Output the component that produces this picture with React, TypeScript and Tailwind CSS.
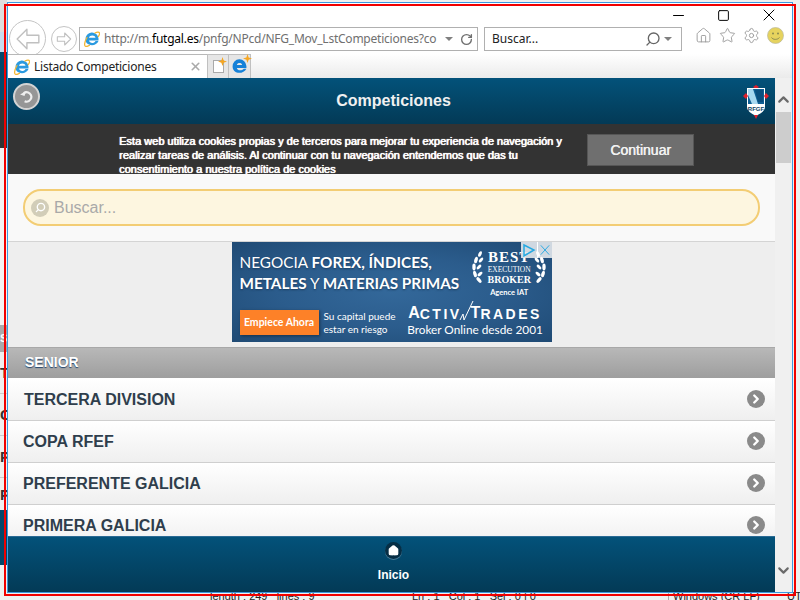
import { House, Star, Settings, RotateCw, Search, X, Minus, Square, ChevronUp, ChevronDown, ChevronRight } from 'lucide-react';

const competitions = [
  { name: 'TERCERA DIVISION', pad: 'pl-[16px]' },
  { name: 'COPA RFEF', pad: 'pl-[15px]' },
  { name: 'PREFERENTE GALICIA', pad: 'pl-[15px]' },
  { name: 'PRIMERA GALICIA', pad: 'pl-[15px]' },
];

function IeLogo({ size = 16 }: { size?: number }) {
  return (
    <svg width={size} height={size} viewBox="0 0 32 32" fill="none">
      <path d="M3 17a13 13 0 0 1 26-2v4H10c1 6 10 7 13 1h6c-4 12-26 11-26-3Zm7-3.500h13c-1-6-12-6-13 0Z" fill="#2a9ae0" fillRule="evenodd" />
      <path d="M22 4c4-2 8-3 9 0 .6 2-1 5-2.500 7M6 13C2 20 0 26 2 29.500c1.500 2 6 1 9-1" stroke="#f2b632" strokeWidth="2.500" strokeLinecap="round" />
    </svg>
  );
}

function SparkTab() {
  return (
    <svg width="9" height="9" viewBox="0 0 8 8" className="absolute -right-[4px] -top-[4px]">
      <path d="M4 0l1 3 3 1-3 1-1 3-1-3-3-1 3-1z" fill="#f5a623" />
    </svg>
  );
}

function BackArrow({ size, box }: { size: number; box: string }) {
  return (
    <div className={`flex items-center justify-center rounded-full border border-[#c4c4c4] bg-white ${box}`}>
      <svg width={size} height={size} viewBox="0 0 24 24" fill="none">
        <path d="M11 3 2 12l9 9v-5.500h11v-7H11z" stroke="#c0c0c0" strokeWidth="1.300" strokeLinejoin="round" />
      </svg>
    </div>
  );
}

function ForwardArrow() {
  return (
    <div className="flex h-[26px] w-[26px] items-center justify-center rounded-full border border-[#c4c4c4] bg-white">
      <svg width="16" height="16" viewBox="0 0 24 24" fill="none">
        <path d="M13 3l9 9-9 9v-5.500H2v-7h11z" stroke="#c0c0c0" strokeWidth="1.600" strokeLinejoin="round" />
      </svg>
    </div>
  );
}

function Smiley() {
  return (
    <svg width="17" height="17" viewBox="0 0 17 17">
      <circle cx="8.500" cy="8.500" r="8" fill="#e6d35e" stroke="#b9b9a0" strokeWidth="0.700" />
      <circle cx="6" cy="6.500" r="1" fill="#8a8a50" />
      <circle cx="11" cy="6.500" r="1" fill="#8a8a50" />
      <path d="M4.500 10.500c1.500 2.500 6 2.500 8 0" stroke="#8a8a50" strokeWidth="1" fill="none" />
    </svg>
  );
}

function Shield() {
  return (
    <svg width="26" height="34" viewBox="0 0 26 34">
      <path d="M10 2l3-2 3 2-3 2z" fill="#e0202c" />
      <path d="M4 3h18v19c0 4-4 6-9 9-5-3-9-5-9-9z" fill="#fff" />
      <path d="M5 4h16v15H5z" fill="#0f5f94" />
      <path d="M5 4h5l5 15H9L5 10z" fill="#a8d8f0" />
      <path d="M12 5h8v12h-5z" fill="#0a4e7e" />
      <path d="M0 11l3-3 2 3-2 3zM26 11l-3-3-2 3 2 3z" fill="#e0202c" />
      <path d="M13 34l-2-4h4z" fill="#e0202c" />
      <text x="13" y="26" textAnchor="middle" fontSize="6" fontWeight="700" fill="#0c3f63" fontFamily="Liberation Sans">RFGF</text>
    </svg>
  );
}

function Laurel({ flip }: { flip?: boolean }) {
  return (
    <svg width="14" height="36" viewBox="0 0 14 34" className={flip ? '-scale-x-100' : ''}>
      <g fill="#fff">
        <ellipse cx="9" cy="3" rx="1.500" ry="3" transform="rotate(25 9 3)" />
        <ellipse cx="5" cy="9" rx="1.700" ry="3.400" transform="rotate(15 5 9)" />
        <ellipse cx="10" cy="9" rx="1.500" ry="3" transform="rotate(40 10 9)" />
        <ellipse cx="3" cy="16" rx="1.700" ry="3.400" />
        <ellipse cx="8" cy="16" rx="1.500" ry="3" transform="rotate(45 8 16)" />
        <ellipse cx="4" cy="23" rx="1.700" ry="3.400" transform="rotate(-15 4 23)" />
        <ellipse cx="9" cy="23" rx="1.500" ry="3" transform="rotate(50 9 23)" />
        <ellipse cx="8" cy="29" rx="1.700" ry="3.400" transform="rotate(-40 8 29)" />
      </g>
    </svg>
  );
}

function AdBanner() {
  return (
    <div className="relative flex h-[100px] w-[320px] flex-col bg-[radial-gradient(ellipse_at_center,#33689a_0%,#2b5c8c_50%,#1f4a74_100%)] pl-[8px] font-['Lato',sans-serif] text-white">
      <div className="absolute right-0 top-0 flex h-[16px] w-[31px] bg-[#e3e8ec]/90">
        <svg width="16" height="16" viewBox="0 0 16 16" fill="none">
          <path d="M3 3l10 5-10 6z" stroke="#27a9e1" strokeWidth="1.500" />
        </svg>
        <svg width="15" height="16" viewBox="0 0 15 16" fill="none" className="border-l border-white">
          <path d="M3 3l9 10M12 3l-9 10" stroke="#27a9e1" strokeWidth="1" />
        </svg>
      </div>
      <div className="flex h-[56px] shrink-0">
        <div className="flex flex-col pt-[10px] text-[15.300px] leading-[21px] [text-shadow:0_1px_2px_#1a3c5f]">
          <div className="h-[21px] whitespace-nowrap">
            NEGOCIA <span className="font-bold">FOREX, ÍNDICES,</span>
          </div>
          <div className="h-[21px] whitespace-nowrap">
            <span className="font-bold">METALES</span> Y <span className="font-bold">MATERIAS PRIMAS</span>
          </div>
        </div>
        <div className="ml-[12px] mt-[8px] flex items-start">
          <Laurel />
          <div className="flex w-[48px] flex-col items-center font-['Liberation_Serif',serif] leading-none">
            <span className="text-[15px] font-bold tracking-[1px]">BEST</span>
            <span className="mt-[1px] text-[7.500px]">EXECUTION</span>
            <span className="mt-[1px] text-[10px] font-bold">BROKER</span>
            <span className="mt-[4px] font-['Lato',sans-serif] text-[7.500px] font-bold">Agence IAT</span>
          </div>
          <Laurel flip />
        </div>
      </div>
      <div className="flex items-start">
        <div className="mt-[12px] flex h-[25px] w-[79px] items-center justify-center bg-[#fd8128] text-[10.500px] font-bold shadow-[1px_1px_3px_rgba(0,0,0,0.4)]">
          Empiece Ahora
        </div>
        <div className="ml-[5px] mt-[12px] flex flex-col text-[10px] leading-[13px]">
          <span className="whitespace-nowrap">Su capital puede</span>
          <span className="whitespace-nowrap">estar en riesgo</span>
        </div>
        <div className="ml-[11px] mt-[3px] flex w-[137px] flex-col items-center">
          <div className="flex h-[20px] items-end font-['Liberation_Sans',sans-serif] font-bold leading-none">
            <span className="text-[16px]">A</span>
            <span className="text-[14px] tracking-[2.500px]">CTIV</span>
            <svg width="15" height="20" viewBox="0 0 15 20" fill="none" className="-mx-[3px]">
              <path d="M1 19 L4 13 L5 19 L14 0" stroke="#fff" strokeWidth="1" />
            </svg>
            <span className="text-[16px]">T</span>
            <span className="text-[14px] tracking-[2.500px]">RADES</span>
          </div>
          <span className="mt-[2px] whitespace-nowrap text-[11.800px] leading-[13px]">Broker Online desde 2001</span>
        </div>
      </div>
    </div>
  );
}

function Toolbar() {
  return (
    <div className="flex h-[75px] shrink-0 flex-col bg-white font-['Noto_Sans',sans-serif]">
      <div className="flex h-[24px] items-center justify-end pr-[1px] text-black">
        <div className="flex w-[45px] justify-center"><Minus size={17} strokeWidth={1.500} /></div>
        <div className="flex w-[45px] justify-center"><Square size={13} strokeWidth={1.800} /></div>
        <div className="flex w-[45px] justify-center"><X size={20} strokeWidth={1.200} /></div>
      </div>
      <div className="flex h-[27px] items-start pl-[1px]">
        <div className="relative -mt-[7px] h-[34px] w-[39px] shrink-0 overflow-hidden">
          <BackArrow size={26} box="h-[37px] w-[37px]" />
        </div>
        <div className="-mt-[1px] ml-[3px]">
          <ForwardArrow />
        </div>
        <div className="ml-[2px] flex h-[24px] w-[399px] items-center border border-[#b0b0b0] px-[4px]">
          <IeLogo />
          <span className="ml-[4px] whitespace-nowrap text-[12px] tracking-[-0.230px] text-[#707070]">
            http://m.<span className="text-black">futgal.es</span>/pnfg/NPcd/NFG_Mov_LstCompeticiones?co
          </span>
          <span className="ml-auto mr-[7px] h-0 w-0 border-x-[4px] border-t-[4px] border-x-transparent border-t-[#808080]" />
          <RotateCw size={13} strokeWidth={2.500} className="text-[#707070]" />
        </div>
        <div className="ml-[6px] flex h-[24px] w-[198px] items-center border border-[#b0b0b0] pl-[7px] pr-[9px] text-[12px] text-[#222]">
          Buscar...
          <Search size={16} strokeWidth={2} className="ml-auto -scale-x-100 text-[#666]" />
          <span className="ml-[3px] h-0 w-0 border-x-[4px] border-t-[4px] border-x-transparent border-t-[#808080]" />
        </div>
        <div className="ml-[13px] flex items-center gap-[7px]">
          <House size={17} strokeWidth={1.300} className="text-[#9a9a9a]" />
          <Star size={17} strokeWidth={1.300} className="text-[#9a9a9a]" />
          <Settings size={17} strokeWidth={1.300} className="text-[#9a9a9a]" />
          <Smiley />
        </div>
      </div>
      <div className="flex h-[24px] bg-linear-to-b from-white to-[#ebebeb]">
        <div className="flex w-[199px] items-center border-t border-[#b8b8b8] bg-white pl-[6px] pr-[5px]">
          <IeLogo />
          <span className="ml-[4px] whitespace-nowrap text-[12px] tracking-[-0.250px] text-[#222]">Listado Competiciones</span>
          <X size={13} strokeWidth={3} className="ml-auto text-[#aaa]" />
        </div>
        <div className="flex h-[24px] w-[22px] items-center justify-center border border-b-0 border-[#c0c0c0] bg-[#e6e6e6]">
          <div className="relative h-[13px] w-[11px] border border-[#aaa] bg-white">
            <SparkTab />
          </div>
        </div>
        <div className="flex h-[24px] w-[22px] items-center justify-center border border-b-0 border-l-0 border-[#c0c0c0] bg-[#e6e6e6]">
          <div className="relative">
            <svg width="17" height="17" viewBox="0 0 32 32">
              <path d="M3 16a13 13 0 0 1 26-1v4H11c1 5 9 6 13 1h5c-5 11-26 11-26-4Zm8-3h10c-1-5-9-5-10 0Z" fill="#1581d8" fillRule="evenodd" />
            </svg>
            <SparkTab />
          </div>
        </div>
      </div>
    </div>
  );
}

function PageScrollbar() {
  return (
    <div className="flex w-[17px] shrink-0 flex-col items-center bg-[#f0f0f0] text-[#6a6a6a]">
      <div className="flex h-[34px] w-full items-end justify-center pb-[4px]">
        <ChevronUp size={17} strokeWidth={3} />
      </div>
      <div className="h-[51px] w-[15px] bg-[#cdcdcd]" />
      <div className="mb-[13px] mt-auto">
        <ChevronDown size={17} strokeWidth={3} />
      </div>
    </div>
  );
}

function CompetitionsPage() {
  return (
    <div className="flex min-w-0 flex-1 flex-col overflow-hidden bg-[#eeeeee] font-['Liberation_Sans',sans-serif]">
      <header className="relative flex h-[46px] shrink-0 items-center justify-center bg-linear-to-b from-[#03527a] to-[#033a56] pl-[4px] text-[16px] font-bold text-[#f0f0f0]">
        <div className="absolute left-[5px] top-[5px] flex h-[27px] w-[27px] items-center justify-center rounded-full border-2 border-[#d4d4d4] bg-[#969696]">
          <svg width="15" height="15" viewBox="0 0 16 16" fill="none">
            <path d="M5 4.500A5 5 0 1 1 6 13" stroke="#eee" strokeWidth="2.300" />
            <path d="M7 1v6H2z" fill="#eee" transform="rotate(20 5 4)" />
          </svg>
        </div>
        Competiciones
        <div className="absolute right-[6px] top-[7px]">
          <Shield />
        </div>
      </header>

      <div className="flex h-[50px] shrink-0 overflow-hidden bg-[#333333]">
        <div className="ml-[111px] mt-[10px] w-[450px] shrink-0 whitespace-nowrap text-[11px] leading-[14px] text-white [text-shadow:0.5px_0_0_#fff,0_0_1px_#fff]">
          <p>Esta web utiliza cookies propias y de terceros para mejorar tu experiencia de navegación y</p>
          <p>realizar tareas de análisis. Al continuar con tu navegación entendemos que das tu</p>
          <p>
            consentimiento a nuestra <span className="underline">política de cookies</span>
          </p>
        </div>
        <button className="ml-[18px] mt-[10px] h-[32px] w-[107px] border border-[#565656] bg-[#6f6f6f] text-[14px] text-[#f2f2f2] [text-shadow:0.5px_0_0_#f2f2f2]">
          Continuar
        </button>
      </div>

      <div className="h-[68px] shrink-0 border-b border-[#d4d4d4] bg-[#f9f9f9] px-[15px] pt-[15px]">
        <div className="flex h-[37px] items-center rounded-[18px] border-2 border-[#f3cd74] bg-[#fdf6e0] pl-[6px]">
          <div className="flex h-[18px] w-[18px] items-center justify-center rounded-full bg-[#d2cdb8]">
            <Search size={11} strokeWidth={3} className="-scale-x-100 text-white" />
          </div>
          <span className="ml-[5px] text-[16px] text-[#a9a9a9]">Buscar...</span>
        </div>
      </div>

      <div className="flex h-[105px] shrink-0 justify-center bg-[#eeeeee]">
        <AdBanner />
      </div>

      <div className="flex h-[31px] shrink-0 items-center border-t border-[#a8a8a8] bg-linear-to-b from-[#b8b8b8] to-[#9e9e9e] pb-[2px] pl-[17px] text-[14px] font-bold text-white [text-shadow:0_1px_1px_#24456b]">
        SENIOR
      </div>

      <ul className="min-h-0 flex-1 overflow-hidden bg-white pt-[1px]">
        {competitions.map(c => (
          <li
            key={c.name}
            className={`flex h-[42px] items-center justify-between border-b border-[#cfcfcf] bg-linear-to-b from-white to-[#efefef] pr-[10px] text-[16px] font-bold text-[#2f3e4c] ${c.pad}`}
          >
            {c.name}
            <span className="-mt-[1px] flex h-[18px] w-[18px] items-center justify-center rounded-full bg-[#8a8a8a]">
              <ChevronRight size={14} strokeWidth={4} className="text-white" />
            </span>
          </li>
        ))}
      </ul>

      <footer className="flex h-[56px] shrink-0 flex-col items-center border-t border-[#2a6a94] bg-linear-to-b from-[#03527a] to-[#033a56] pl-[4px] pt-[5px] text-[12px] font-bold text-white">
        <div className="flex h-[17px] w-[17px] items-center justify-center rounded-full bg-[#062e45] shadow-[0_1px_0_#4a7d9a]">
          <House size={11} strokeWidth={3} fill="#fff" className="text-white" />
        </div>
        <span className="mt-[7px]">Inicio</span>
      </footer>
    </div>
  );
}

// what shows of the windows lying behind the browser
function BehindWindow() {
  return (
    <>
      <div className="absolute left-0 top-0 flex h-[600px] w-[7px] flex-col overflow-hidden bg-[#f0f0f0] font-['Liberation_Sans',sans-serif] text-[15px] font-bold leading-none text-[#333]">
        <div className="h-[32px] shrink-0 bg-[#dedede]" />
        <div className="h-[20px] shrink-0 bg-[#c8dcee]" />
        <div className="h-[48px] shrink-0 bg-[#04476a]" />
        <div className="h-[48px] shrink-0 bg-[#333]" />
        <div className="h-[177px] shrink-0 bg-[#f4f4f4]" />
        <div className="flex h-[27px] shrink-0 items-center bg-[#aaa] text-[11px] text-white">S</div>
        <div className="flex h-[42px] shrink-0 items-center border-b border-[#ccc]">T</div>
        <div className="flex h-[42px] shrink-0 items-center border-b border-[#ccc]">C</div>
        <div className="flex h-[42px] shrink-0 items-center border-b border-[#ccc]">P</div>
        <div className="flex h-[32px] shrink-0 items-center">P</div>
        <div className="h-[55px] shrink-0 bg-[#04476a]" />
      </div>
      <div className="absolute bottom-0 left-0 flex h-[8px] w-[800px] items-end overflow-hidden bg-[#f0f0f0] pl-[210px] font-['Liberation_Sans',sans-serif] text-[11px] leading-[8px] text-[#222]">
        <span className="w-[202px] shrink-0">length : 249 &nbsp; lines : 9</span>
        <span className="w-[256px] shrink-0">Ln : 1 &nbsp; Col : 1 &nbsp; Sel : 0 | 0</span>
        <span className="w-[119px] shrink-0 whitespace-nowrap border-l border-[#aaa] pl-[4px]">Windows (CR LF)</span>
        <span>UTF</span>
      </div>
    </>
  );
}

export default function App() {
  return (
    <div className="relative h-[600px] w-[800px] overflow-hidden bg-[#f0f0f0]">
      <BehindWindow />
      <div className="absolute left-[7px] top-[2px] flex h-[591px] w-[786px] flex-col overflow-hidden border border-[#3b99e0] bg-white">
        <Toolbar />
        <div className="flex min-h-0 flex-1">
          <CompetitionsPage />
          <PageScrollbar />
        </div>
      </div>
      <div className="pointer-events-none absolute left-[4px] top-[4px] h-[592px] w-[792px] border-2 border-[#f00000]" />
    </div>
  );
}
